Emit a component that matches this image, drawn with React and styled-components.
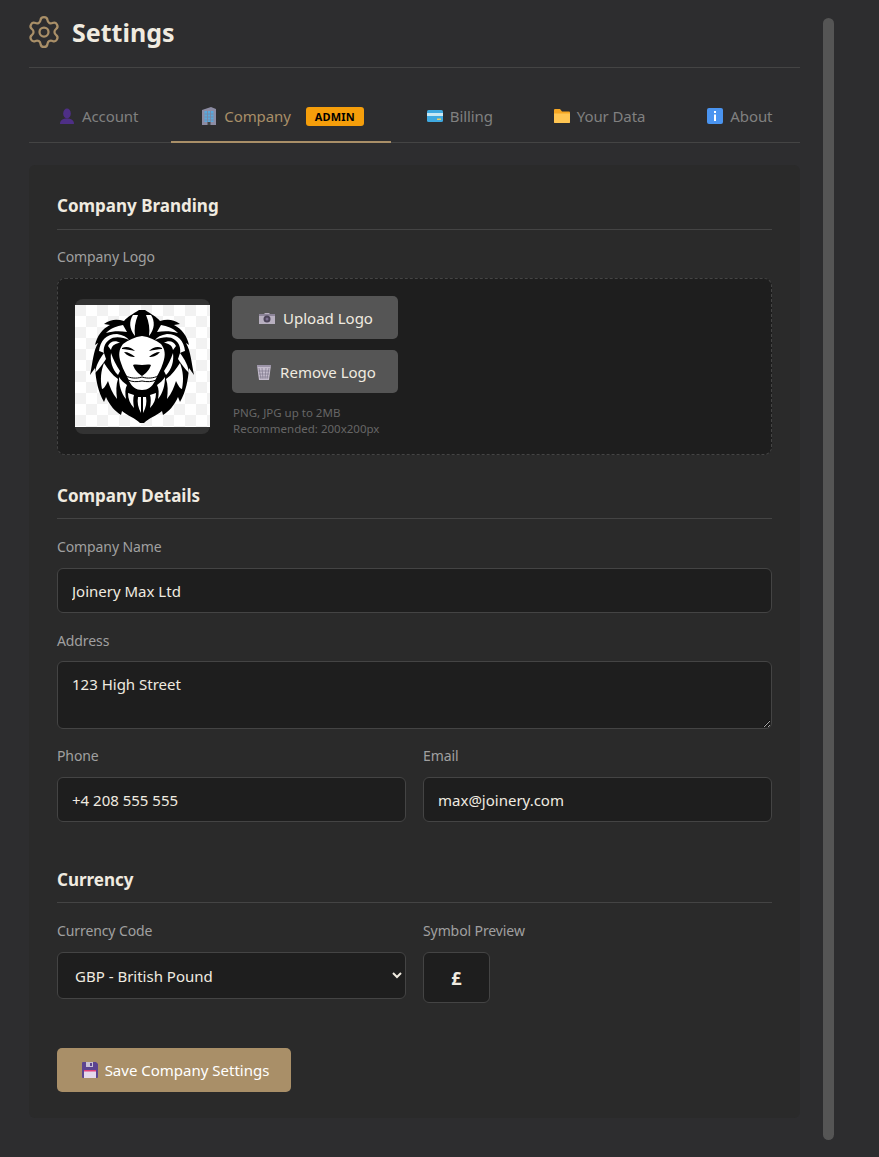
import React from 'react'
import styled, { createGlobalStyle } from 'styled-components'
import { Settings } from 'lucide-react'

const GlobalStyle = createGlobalStyle`
  html, body {
    margin: 0;
    background: #2d2d2f;
    color-scheme: dark;
  }
  * {
    box-sizing: border-box;
  }
`

const font = `"Noto Sans", "Open Sans", sans-serif`

const Page = styled.div`
  display: flex;
  align-items: flex-start;
  height: 1157px;
  overflow: hidden;
  font-family: ${font};
`

const Main = styled.main`
  width: 771px;
  margin-left: 29px;
`

const ScrollThumb = styled.div`
  width: 11px;
  height: 1122px;
  margin: 18px 0 0 23px;
  border-radius: 6px;
  background: #555;
`

const Header = styled.header`
  display: flex;
  align-items: center;
  gap: 10px;
  height: 68px;
  padding-bottom: 4px;
  border-bottom: 1px solid #444;
  color: #a98f68;
  svg {
    margin-left: -3px;
  }
`

const Title = styled.h1`
  margin: 0;
  font-size: 25px;
  font-weight: 700;
  color: #f0ebe0;
`

const Tabs = styled.nav`
  display: flex;
  gap: 2px;
  height: 75px;
  padding-top: 22px;
  border-bottom: 1px solid #444;
  white-space: nowrap;
`

const Tab = styled.div`
  display: flex;
  align-items: center;
  gap: 7px;
  height: 53px;
  padding: 0 ${p => (p.$active ? '27px' : '30px')} 0 30px;
  border-bottom: 2px solid ${p => (p.$active ? '#a98f68' : 'transparent')};
  margin-left: ${p => p.$shift || 0}px;
  font-size: 15px;
  letter-spacing: -0.1px;
  color: ${p => (p.$active ? '#a98f68' : '#808080')};
`

const Badge = styled.span`
  display: block;
  width: 58px;
  height: 19px;
  margin: 2px 0 0 8px;
  border-radius: 3px;
  background: #f59e0b;
  color: #000;
  font-size: 11px;
  line-height: 19px;
  font-weight: 700;
  letter-spacing: 0.2px;
  text-align: center;
`

const Panel = styled.section`
  margin-top: 22px;
  height: 953px;
  padding: 28px 28px 0;
  border-radius: 6px;
  background: #2a2a2a;
`

const SectionTitle = styled.h2`
  margin: ${p => p.$top || 0}px 0 0;
  height: ${p => p.$h || 36}px;
  padding-top: 1px;
  border-bottom: 1px solid #444;
  font-size: 17px;
  line-height: 24px;
  font-weight: 700;
  color: #f0ebe0;
`

const Label = styled.label`
  display: block;
  height: 20px;
  margin-bottom: ${p => p.$gap || 11}px;
  font-size: 14px;
  line-height: 20px;
  letter-spacing: -0.1px;
  color: #a0a0a0;
`

const LogoBox = styled.div`
  display: flex;
  gap: 22px;
  height: 177px;
  padding: 17px;
  border: 1px dashed #444;
  border-radius: 8px;
  background: #1e1e1e;
`

const LogoFrame = styled.div`
  width: 135px;
  height: 135px;
  margin-top: 3px;
  padding-top: 6px;
  border-radius: 8px;
  background: #333;
  svg {
    display: block;
  }
`

const LogoActions = styled.div`
  display: flex;
  flex-direction: column;
  width: 166px;
`

const GreyButton = styled.button`
  display: flex;
  align-items: center;
  justify-content: center;
  gap: 8px;
  width: 166px;
  height: ${p => p.$h}px;
  margin-bottom: ${p => p.$mb}px;
  padding: 2px 0 0 2px;
  border: 0;
  border-radius: 5px;
  background: #555;
  color: #f0ebe0;
  font-family: ${font};
  font-size: 15px;
`

const Hint = styled.div`
  padding-left: 1px;
  font-size: 11.500px;
  line-height: 16px;
  color: #666;
`

const fieldStyles = `
  display: block;
  width: 100%;
  border: 1px solid #444;
  border-radius: 6px;
  background: #1e1e1e;
  color: #f0ebe0;
  font-family: ${font};
  font-size: 15px;
  outline: none;
`

const Input = styled.input`
  ${fieldStyles}
  height: 45px;
  padding: 0 14px;
`

const TextArea = styled.textarea`
  ${fieldStyles}
  height: 68px;
  padding: 11px 14px;
  line-height: 22px;
  resize: vertical;
`

const Select = styled.select`
  ${fieldStyles}
  height: 47px;
  padding: 0 13px;
`

const Field = styled.div`
  margin-top: ${p => p.$top || 0}px;
`

const Columns = styled.div`
  display: grid;
  grid-template-columns: 349px 349px;
  gap: 17px;
  margin-top: ${p => p.$top || 0}px;
`

const SymbolBox = styled.div`
  display: flex;
  align-items: center;
  justify-content: center;
  width: 67px;
  height: 51px;
  border: 1px solid #444;
  border-radius: 6px;
  background: #1e1e1e;
  color: #f0ebe0;
  font-size: 18px;
  font-weight: 700;
`

const SaveButton = styled.button`
  display: flex;
  align-items: center;
  justify-content: center;
  gap: 7px;
  width: 234px;
  height: 44px;
  margin-top: 45px;
  padding: 0 0 0 3px;
  border: 0;
  border-radius: 5px;
  background: #a98f68;
  color: #fff;
  font-family: ${font};
  font-size: 15px;
`

const PersonIcon = () => (
  <svg width="16" height="16" viewBox="0 0 16 16">
    <ellipse cx="8" cy="5.500" rx="3.800" ry="5" fill="#4e2f86" />
    <path d="M1 16c0-4 3-5.500 7-5.500s7 1.500 7 5.500z" fill="#4e2f86" />
  </svg>
)

const BuildingIcon = () => (
  <svg width="16" height="18" viewBox="0 0 16 18">
    <path d="M1 3l9-3 5 2v16H1z" fill="#8c8ca4" />
    <rect x="3.500" y="4" width="9" height="11" fill="#58a8dc" />
    <path d="M3.500 7h9M3.500 10h9M3.500 13h9M6.500 4v11M9.500 4v11" stroke="#7c84a0" strokeWidth="0.800" />
    <rect x="6.500" y="15" width="3" height="3" fill="#444" />
  </svg>
)

const CardIcon = () => (
  <svg width="16" height="12" viewBox="0 0 16 12">
    <rect width="16" height="12" rx="1.500" fill="#3fa9e0" />
    <rect y="3" width="16" height="3" fill="#c8e8f4" />
    <rect x="10" y="8.500" width="4" height="1.500" fill="#f0d060" />
  </svg>
)

const FolderIcon = () => (
  <svg width="16" height="14" viewBox="0 0 16 14">
    <path d="M0 1q0-1 1-1h5l2 2.500h7q1 0 1 1V13q0 1-1 1H1q-1 0-1-1z" fill="#f5a623" />
    <path d="M0 4.500h16V13q0 1-1 1H1q-1 0-1-1z" fill="#ffc552" />
  </svg>
)

const InfoIcon = () => (
  <svg width="16" height="16" viewBox="0 0 16 16">
    <rect width="16" height="16" rx="2" fill="#4a94f0" />
    <rect x="7" y="3" width="2" height="2" fill="#fff" />
    <rect x="7" y="6.500" width="2" height="6.500" fill="#fff" />
  </svg>
)

const CameraIcon = () => (
  <svg width="16" height="11" viewBox="0 0 16 11">
    <path d="M0 1h5l1-1h4l1 1h5v10H0z" fill="#b8b0c0" />
    <rect y="1" width="16" height="2" fill="#8c8498" />
    <circle cx="8" cy="6" r="3.500" fill="#4c4458" />
    <circle cx="8" cy="6" r="1.500" fill="#7c7090" />
  </svg>
)

const TrashIcon = () => (
  <svg width="16" height="16" viewBox="0 0 16 16">
    <path d="M1 1h14l-2 15H3z" fill="#c4bccc" />
    <path d="M3 4l2 11M6 4l1 11M10 4l-1 11M13 4l-2 11M2.500 7h11M3 10h10M3.500 13h9" stroke="#80788c" strokeWidth="0.700" />
    <rect x="1" y="1" width="14" height="2" fill="#9c94a8" />
  </svg>
)

const FloppyIcon = () => (
  <svg width="16" height="16" viewBox="0 0 16 16">
    <path d="M0 1q0-1 1-1h13l2 2v13q0 1-1 1H1q-1 0-1-1z" fill="#5c4490" />
    <rect x="4" y="0" width="7" height="5" fill="#c8c0d4" />
    <rect x="8" y="1" width="2" height="3" fill="#5c4490" />
    <rect x="2" y="8" width="12" height="8" fill="#e4d8ec" />
    <rect x="2" y="8" width="12" height="1.500" fill="#e0407a" />
  </svg>
)

const LionLogo = () => (
  <svg width="135" height="122" viewBox="0 0 135 122">
    <defs>
      <pattern id="checker" width="22" height="22" patternUnits="userSpaceOnUse">
        <rect width="22" height="22" fill="#fff" />
        <rect width="11" height="11" fill="#f2f2f2" />
        <rect x="11" y="11" width="11" height="11" fill="#f2f2f2" />
      </pattern>
      <g id="lion-half">
        {/* mane */}
        <path d="M64 5C58 9 52 12 49 16C42 14 36 14 29 19L35 20C27 24 22 31 20 40L23 38C18 47 18 56 15 70L20 63C21 76 23 86 29 97L31 92C35 101 40 106 46 110L47 106C53 111 60 113 65 118L67 118L67 5Z" fill="#000" />
        {/* hair streaks */}
        <path d="M58 10C54 16 54 24 60 31C59 24 60 17 63 10Z" fill="#fff" />
        <path d="M48 20C42 21 36 23 31 28C38 26 45 26 52 27Z" fill="#fff" />
        <path d="M24 46C25 36 31 29 42 29C48 30 52 32 54 35C47 32 39 31 34 35C30 38 28 43 29 48C27 47 25 46 24 46Z" fill="#fff" />
        <path d="M33 41C35 36 41 35 45 38C41 38 37 40 36 45Z" fill="#fff" />
        <path d="M29 48C24 55 21 60 20 68C24 64 27 60 31 54Z" fill="#fff" />
        <path d="M29 58C26 66 25 74 27 84C29 84 31 80 33 76C35 82 37 88 42 94C41 86 41 80 43 74C37 70 33 64 29 58Z" fill="#fff" />
        <path d="M36 48C35 56 37 64 43 70L45 66C41 60 38 54 36 48Z" fill="#fff" />
        <path d="M44 72C44 80 46 88 51 94C50 88 50 84 52 80C49 78 46 75 44 72Z" fill="#fff" />
        <path d="M53 88C53 94 55 99 59 103C58 97 58 93 59 90Z" fill="#fff" />
        <path d="M63 92C62 97 63 103 66 108C66 103 66 97 66 92Z" fill="#fff" />
        {/* face */}
        <path d="M67 31C60 32 53 35 48 39C44 44 43 50 46 58C48 65 52 70 54 76C57 82 61 85 67 85Z" fill="#fff" />
        <path d="M49 47C53 47 57 49 60 52C56 52 52 51 49 47Z" fill="#000" />
        <path d="M47 43C51 41 56 42 60 46C55 45 51 44 47 44Z" fill="#000" />
        <path d="M58 60C61 59 64 60 67 60L67 71C64 69 60 66 58 60Z" fill="#000" />
        <path d="M51 71C55 73 61 74 67 72M53 75C57 77 62 77 67 76" stroke="#000" strokeWidth="1" fill="none" />
      </g>
    </defs>
    <rect width="135" height="122" fill="url(#checker)" />
    <use href="#lion-half" />
    <use href="#lion-half" transform="translate(134 0) scale(-1 1)" />
  </svg>
)

export default function App() {
  return (
    <Page>
      <GlobalStyle />
      <Main>
        <Header>
          <Settings size={36} strokeWidth={1.5} />
          <Title>Settings</Title>
        </Header>
        <Tabs>
          <Tab><PersonIcon />Account</Tab>
          <Tab $active $shift={1}><BuildingIcon />Company<Badge>ADMIN</Badge></Tab>
          <Tab $shift={4}><CardIcon />Billing</Tab>
          <Tab $shift={-1}><FolderIcon />Your Data</Tab>
          <Tab><InfoIcon />About</Tab>
        </Tabs>
        <Panel>
          <SectionTitle $h={37}>Company Branding</SectionTitle>
          <Field $top={17}>
            <Label>Company Logo</Label>
            <LogoBox>
              <LogoFrame><LionLogo /></LogoFrame>
              <LogoActions>
                <GreyButton $h={43} $mb={11}><CameraIcon />Upload Logo</GreyButton>
                <GreyButton $h={44} $mb={12}><TrashIcon />Remove Logo</GreyButton>
                <Hint>PNG, JPG up to 2MB<br />Recommended: 200x200px</Hint>
              </LogoActions>
            </LogoBox>
          </Field>
          <SectionTitle $top={28}>Company Details</SectionTitle>
          <Field $top={18}>
            <Label>Company Name</Label>
            <Input defaultValue="Joinery Max Ltd" />
          </Field>
          <Field $top={18}>
            <Label $gap={10}>Address</Label>
            <TextArea defaultValue="123 High Street" />
          </Field>
          <Columns $top={17}>
            <Field>
              <Label>Phone</Label>
              <Input defaultValue="+4 208 555 555" />
            </Field>
            <Field>
              <Label>Email</Label>
              <Input defaultValue="max@joinery.com" />
            </Field>
          </Columns>
          <SectionTitle $top={45}>Currency</SectionTitle>
          <Columns $top={18}>
            <Field>
              <Label>Currency Code</Label>
              <Select defaultValue="GBP">
                <option value="GBP">GBP - British Pound</option>
                <option value="USD">USD - US Dollar</option>
                <option value="EUR">EUR - Euro</option>
              </Select>
            </Field>
            <Field>
              <Label>Symbol Preview</Label>
              <SymbolBox>£</SymbolBox>
            </Field>
          </Columns>
          <SaveButton><FloppyIcon />Save Company Settings</SaveButton>
        </Panel>
      </Main>
      <ScrollThumb />
    </Page>
  )
}
